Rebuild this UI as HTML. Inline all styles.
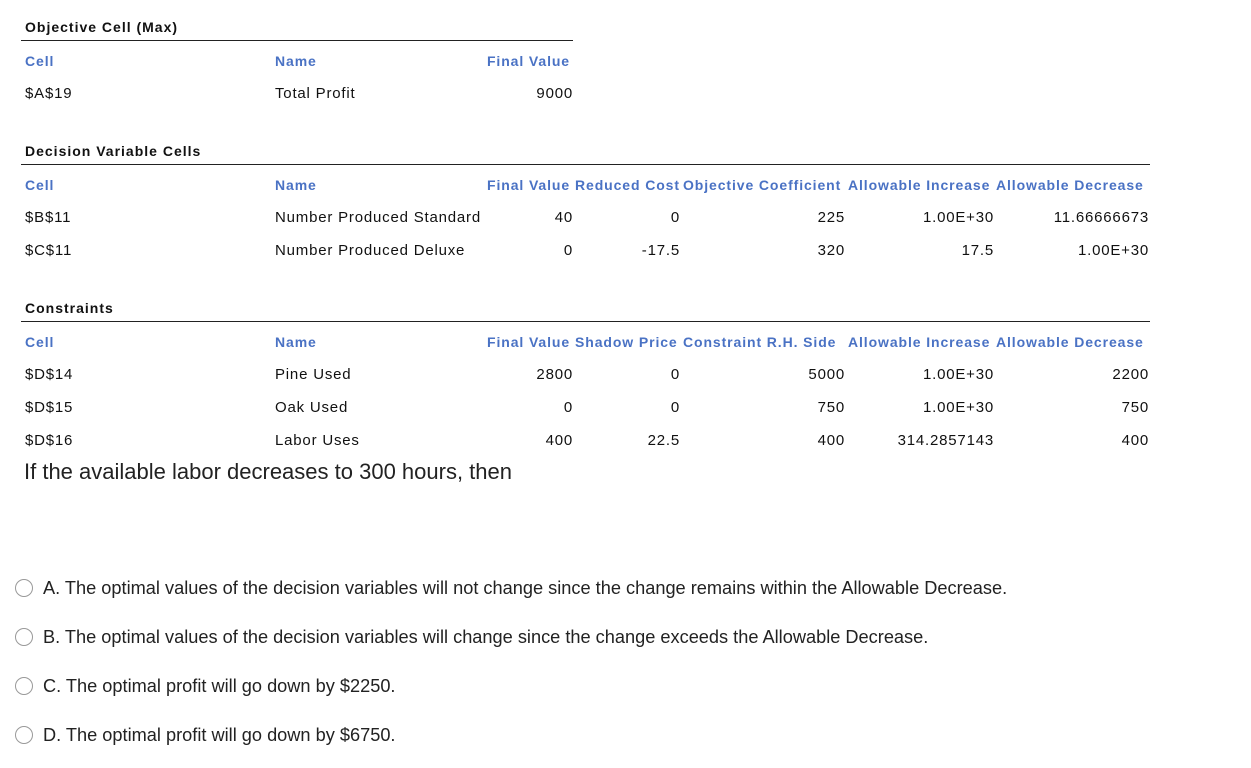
<!DOCTYPE html>
<html><head><meta charset="utf-8"><style>
body{margin:0;width:1251px;height:768px;background:#fff;font-family:"Liberation Sans",sans-serif;position:relative;overflow:hidden}
.t{position:absolute;white-space:nowrap;font-size:15px;letter-spacing:.8px;color:#111;line-height:16px;margin-top:1px}
.b{font-weight:bold;font-size:14px;letter-spacing:1px}
.h{font-weight:bold;color:#4a72c4;font-size:14px;letter-spacing:.9px}
.r{text-align:right;margin-right:1px}
.line{position:absolute;height:1px;background:#222;left:21px}
.opt{position:absolute;left:15px;font-size:18.2px;color:#222;white-space:nowrap;line-height:20px}
.opt i{display:inline-block;width:18px;height:18px;border:1px solid #999;border-radius:50%;vertical-align:-3px;margin-right:10px;box-sizing:border-box}
</style></head><body>
<div class="t b" style="left:25px;top:18px">Objective Cell (Max)</div>
<div class="line" style="top:40px;width:552px"></div>
<div class="t h" style="left:25px;top:52px">Cell</div>
<div class="t h" style="left:275px;top:52px">Name</div>
<div class="t h r" style="right:680px;top:52px">Final Value</div>
<div class="t" style="left:25px;top:85px">$A$19</div>
<div class="t" style="left:275px;top:85px">Total Profit</div>
<div class="t r" style="right:677px;top:85px">9000</div>

<div class="t b" style="left:25px;top:142px">Decision Variable Cells</div>
<div class="line" style="top:164px;width:1129px"></div>
<div class="t h" style="left:25px;top:176px">Cell</div>
<div class="t h" style="left:275px;top:176px">Name</div>
<div class="t h" style="left:487px;top:176px">Final Value</div>
<div class="t h" style="left:575px;top:176px">Reduced Cost</div>
<div class="t h" style="left:683px;top:176px">Objective Coefficient</div>
<div class="t h" style="left:848px;top:176px">Allowable Increase</div>
<div class="t h" style="left:996px;top:176px">Allowable Decrease</div>
<div class="t" style="left:25px;top:209px">$B$11</div>
<div class="t" style="left:275px;top:209px">Number Produced Standard</div>
<div class="t r" style="right:677px;top:209px">40</div>
<div class="t r" style="right:570px;top:209px">0</div>
<div class="t r" style="right:405px;top:209px">225</div>
<div class="t r" style="right:256px;top:209px">1.00E+30</div>
<div class="t r" style="right:101px;top:209px">11.66666673</div>
<div class="t" style="left:25px;top:242px">$C$11</div>
<div class="t" style="left:275px;top:242px">Number Produced Deluxe</div>
<div class="t r" style="right:677px;top:242px">0</div>
<div class="t r" style="right:570px;top:242px">-17.5</div>
<div class="t r" style="right:405px;top:242px">320</div>
<div class="t r" style="right:256px;top:242px">17.5</div>
<div class="t r" style="right:101px;top:242px">1.00E+30</div>

<div class="t b" style="left:25px;top:299px">Constraints</div>
<div class="line" style="top:321px;width:1129px"></div>
<div class="t h" style="left:25px;top:333px">Cell</div>
<div class="t h" style="left:275px;top:333px">Name</div>
<div class="t h" style="left:487px;top:333px">Final Value</div>
<div class="t h" style="left:575px;top:333px">Shadow Price</div>
<div class="t h" style="left:683px;top:333px">Constraint R.H. Side</div>
<div class="t h" style="left:848px;top:333px">Allowable Increase</div>
<div class="t h" style="left:996px;top:333px">Allowable Decrease</div>
<div class="t" style="left:25px;top:366px">$D$14</div>
<div class="t" style="left:275px;top:366px">Pine Used</div>
<div class="t r" style="right:677px;top:366px">2800</div>
<div class="t r" style="right:570px;top:366px">0</div>
<div class="t r" style="right:405px;top:366px">5000</div>
<div class="t r" style="right:256px;top:366px">1.00E+30</div>
<div class="t r" style="right:101px;top:366px">2200</div>
<div class="t" style="left:25px;top:399px">$D$15</div>
<div class="t" style="left:275px;top:399px">Oak Used</div>
<div class="t r" style="right:677px;top:399px">0</div>
<div class="t r" style="right:570px;top:399px">0</div>
<div class="t r" style="right:405px;top:399px">750</div>
<div class="t r" style="right:256px;top:399px">1.00E+30</div>
<div class="t r" style="right:101px;top:399px">750</div>
<div class="t" style="left:25px;top:432px">$D$16</div>
<div class="t" style="left:275px;top:432px">Labor Uses</div>
<div class="t r" style="right:677px;top:432px">400</div>
<div class="t r" style="right:570px;top:432px">22.5</div>
<div class="t r" style="right:405px;top:432px">400</div>
<div class="t r" style="right:256px;top:432px">314.2857143</div>
<div class="t r" style="right:101px;top:432px">400</div>

<div class="t" style="left:24px;top:459px;font-size:22px;letter-spacing:0;line-height:24px;color:#222">If the available labor decreases to 300 hours, then</div>

<div class="opt" style="top:578px"><i></i>A. The optimal values of the decision variables will not change since the change remains within the Allowable Decrease.</div>
<div class="opt" style="top:627px"><i></i>B. The optimal values of the decision variables will change since the change exceeds the Allowable Decrease.</div>
<div class="opt" style="top:676px"><i></i>C. The optimal profit will go down by $2250.</div>
<div class="opt" style="top:725px"><i></i>D. The optimal profit will go down by $6750.</div>
</body></html>
